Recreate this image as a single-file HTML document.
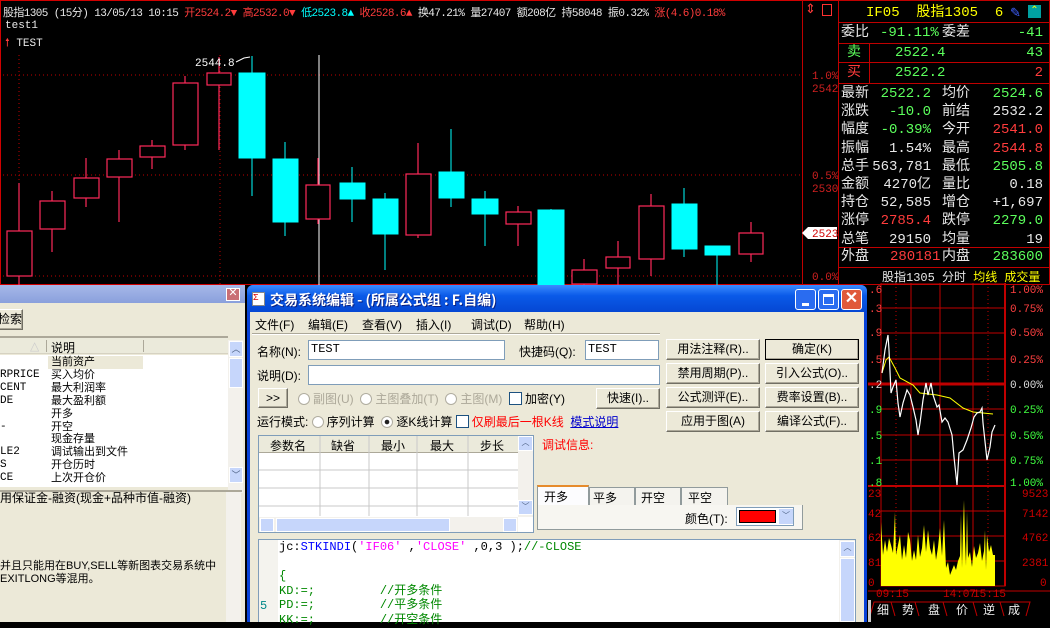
<!DOCTYPE html>
<html><head><meta charset="utf-8">
<style>
*{margin:0;padding:0;box-sizing:border-box}
body{width:1050px;height:622px;overflow:hidden;background:#000;position:relative;font-family:"Liberation Mono","WenQuanYi Zen Hei","Noto Sans CJK SC",monospace;font-size:12px}
.a{position:absolute;white-space:nowrap}
.r{color:#ff3c3c}.g{color:#5cff5c}.w{color:#e8e8e8}.y{color:#ffff00}.c{color:#00ffff}
.qp div.a{font-size:14px;line-height:16px}
.btn{position:absolute;background:#ece9d8;border:1px solid #fff;border-right-color:#716f64;border-bottom-color:#716f64;box-shadow:inset -1px -1px 0 #aca899;font-family:"Liberation Sans","WenQuanYi Zen Hei",sans-serif;font-size:12px;text-align:center;line-height:18px;color:#000}
.inp{position:absolute;background:#fff;border:1px solid #7f9db9;font-size:12px;padding-left:2px;line-height:17px}
.t{position:absolute;white-space:nowrap;font-family:"Liberation Sans","WenQuanYi Zen Hei",sans-serif;font-size:12px;color:#000}
.rad{display:inline-block;width:12px;height:12px;border:1px solid #b0ada0;border-radius:50%;background:#fff;vertical-align:-2px;margin-right:3px}
.chk{display:inline-block;width:13px;height:13px;border:1px solid #1c5180;background:#fff;vertical-align:-2px;margin-right:3px}
</style></head><body>

<!-- main chart -->
<div class="a" style="left:0;top:0;width:838px;height:285px;border:1px solid #d00000;border-right:none"></div>
<div class="a" style="left:802px;top:0;width:1px;height:285px;background:#c00000"></div>
<div class="a" style="left:3px;top:4px;font-size:11px;letter-spacing:-0.6px"><span class="w">股指1305 (15分) 13/05/13 10:15 </span><span class="r">开2524.2▼ 高2532.0▼ </span><span class="c">低2523.8▲ </span><span class="r">收2528.6▲ </span><span class="w">换47.21% 量27407 额208亿 持58048 振0.32% </span><span class="r">涨(4.6)0.18%</span></div>
<div class="a r" style="left:805px;top:2px;font-size:13px">⇕</div>
<div class="a" style="left:822px;top:4px;width:10px;height:12px;border:1px solid #ff3030"></div>
<div class="a w" style="left:5px;top:20px;font-size:11px">test1</div>
<div class="a" style="left:5px;top:34px;font-size:11px"><span class="r">🠕</span><span class="w"> TEST</span></div>

<svg class="a" style="left:0;top:0" width="838" height="285">
<g stroke="#c00000" stroke-dasharray="1,3">
<line x1="3" y1="75" x2="802" y2="75"/><line x1="3" y1="175" x2="802" y2="175"/><line x1="3" y1="276" x2="802" y2="276"/>
<line x1="19" y1="55" x2="19" y2="285"/><line x1="220" y1="55" x2="220" y2="285"/>
</g>
<line x1="319" y1="55" x2="319" y2="285" stroke="#fff"/>
<g stroke="#ff2a5a" stroke-width="1.2" fill="#000">
<line x1="19" y1="183" x2="19" y2="285"/><rect x="7" y="231" width="25" height="45"/>
<line x1="52" y1="191" x2="52" y2="252"/><rect x="40" y="201" width="25" height="28"/>
<line x1="86" y1="158" x2="86" y2="207"/><rect x="74" y="178" width="25" height="20"/>
<line x1="119" y1="150" x2="119" y2="222"/><rect x="107" y="159" width="25" height="18"/>
<line x1="152" y1="140" x2="152" y2="169"/><rect x="140" y="146" width="25" height="11"/>
<line x1="185" y1="76" x2="185" y2="150"/><rect x="173" y="83" width="25" height="62"/>
<line x1="219" y1="57" x2="219" y2="150"/><rect x="207" y="73" width="24" height="12"/>
<line x1="318" y1="158" x2="318" y2="224"/><rect x="306" y="185" width="24" height="34"/>
<line x1="418" y1="143" x2="418" y2="238"/><rect x="406" y="174" width="25" height="61"/>
<line x1="518" y1="206" x2="518" y2="246"/><rect x="506" y="212" width="25" height="12"/>
<line x1="584" y1="259" x2="584" y2="285"/><rect x="572" y="270" width="25" height="14"/>
<line x1="618" y1="241" x2="618" y2="285"/><rect x="606" y="257" width="24" height="11"/>
<line x1="651" y1="194" x2="651" y2="276"/><rect x="639" y="206" width="25" height="53"/>
<line x1="751" y1="222" x2="751" y2="262"/><rect x="739" y="233" width="24" height="21"/>
</g>
<g stroke="#00ffff" fill="#00ffff">
<line x1="252" y1="56" x2="252" y2="196"/><rect x="239" y="73" width="26" height="85"/>
<line x1="285" y1="142" x2="285" y2="236"/><rect x="273" y="159" width="25" height="63"/>
<line x1="352" y1="167" x2="352" y2="222"/><rect x="340" y="183" width="25" height="16"/>
<line x1="385" y1="193" x2="385" y2="270"/><rect x="373" y="199" width="25" height="35"/>
<line x1="451" y1="129" x2="451" y2="207"/><rect x="439" y="172" width="25" height="26"/>
<line x1="485" y1="191" x2="485" y2="246"/><rect x="472" y="199" width="26" height="15"/>
<line x1="551" y1="209" x2="551" y2="285"/><rect x="538" y="210" width="26" height="75"/>
<line x1="684" y1="188" x2="684" y2="257"/><rect x="672" y="204" width="25" height="45"/>
<line x1="717" y1="246" x2="717" y2="285"/><rect x="705" y="246" width="25" height="9"/>
</g>
<polyline points="236,62 244,58 250,57" stroke="#fff" fill="none"/>
<text x="195" y="66" fill="#fff" font-size="11" font-family="Liberation Mono">2544.8</text>
<g fill="#d02020" font-size="11" font-family="Liberation Mono">
<text x="812" y="79">1.0%</text><text x="812" y="92">2542</text>
<text x="812" y="179">0.5%</text><text x="812" y="192">2530</text>
<text x="812" y="280">0.0%</text></g>
<polygon points="802,233 808,227 837,227 837,239 808,239" fill="#fff"/>
<text x="812" y="237" fill="#d00000" font-size="11" font-family="Liberation Mono">2523</text>
</svg>

<!-- right quote panel -->
<div class="qp">
<div class="a" style="left:838px;top:0;width:212px;height:285px;border:1px solid #c00000"></div>
<div class="a y" style="left:866px;top:5px">IF05 &nbsp;股指1305 &nbsp;6</div>
<div class="a" style="left:1010px;top:6px;color:#4060ff;font-size:13px">✎</div>
<div class="a" style="left:1028px;top:5px;width:13px;height:13px;background:#00a0a0;color:#ff0;font-size:10px;line-height:13px;text-align:center">⌃</div>
<div class="a" style="left:838px;top:22px;width:212px;height:1px;background:#c00000"></div>
<div class="a" style="left:838px;top:43px;width:212px;height:1px;background:#c00000"></div>
<div class="a" style="left:838px;top:62px;width:212px;height:1px;background:#c00000"></div>
<div class="a" style="left:838px;top:83px;width:212px;height:1px;background:#c00000"></div>
<div class="a" style="left:869px;top:43px;width:1px;height:40px;background:#c00000"></div>
<div class="a" style="left:838px;top:247px;width:212px;height:1px;background:#c00000"></div>
<div class="a" style="left:838px;top:267px;width:212px;height:1px;background:#c00000"></div>
<div class="a w" style="left:841px;top:25px">委比</div><div class="a g" style="left:880px;top:25px">-91.11%</div><div class="a w" style="left:942px;top:25px">委差</div><div class="a g" style="right:7px;top:25px">-41</div>
<div class="a g" style="left:847px;top:45px">卖</div><div class="a g" style="left:895px;top:45px">2522.4</div><div class="a g" style="right:7px;top:45px">43</div>
<div class="a r" style="left:847px;top:65px">买</div><div class="a g" style="left:895px;top:65px">2522.2</div><div class="a r" style="right:7px;top:65px">2</div>
<div class="a w" style="left:841px;top:85px;line-height:18.2px">最新<br>涨跌<br>幅度<br>振幅<br>总手<br>金额<br>持仓<br>涨停<br>总笔</div>
<div class="a" style="right:119px;top:85px;line-height:18.2px;text-align:right"><span class="g">2522.2</span><br><span class="g">-10.0</span><br><span class="g">-0.39%</span><br><span class="w">1.54%</span><br><span class="w">563,781</span><br><span class="w">4270亿</span><br><span class="w">52,585</span><br><span class="r">2785.4</span><br><span class="w">29150</span></div>
<div class="a w" style="left:942px;top:85px;line-height:18.2px">均价<br>前结<br>今开<br>最高<br>最低<br>量比<br>增仓<br>跌停<br>均量</div>
<div class="a" style="right:7px;top:85px;line-height:18.2px;text-align:right"><span class="g">2524.6</span><br><span class="w">2532.2</span><br><span class="r">2541.0</span><br><span class="r">2544.8</span><br><span class="g">2505.8</span><br><span class="w">0.18</span><br><span class="w">+1,697</span><br><span class="g">2279.0</span><br><span class="w">19</span></div>
<div class="a w" style="left:841px;top:249px">外盘</div><div class="a r" style="left:890px;top:249px">280181</div><div class="a w" style="left:942px;top:249px">内盘</div><div class="a g" style="right:7px;top:249px">283600</div>
</div>
<div class="a" style="left:882px;top:268px;font-size:12px"><span class="w">股指1305 分时 </span><span class="y">均线 成交量</span></div>

<!-- intraday -->
<svg class="a" style="left:860px;top:283px" width="190" height="339">
<g transform="translate(-860,-283)">
<g stroke="#c00000" fill="none">
<line x1="881" y1="308" x2="1005" y2="308"/><line x1="881" y1="333" x2="1005" y2="333"/><line x1="881" y1="359" x2="1005" y2="359"/>
<line x1="881" y1="409" x2="1005" y2="409"/><line x1="881" y1="435" x2="1005" y2="435"/><line x1="881" y1="460" x2="1005" y2="460"/>
<line x1="881" y1="511" x2="1005" y2="511"/><line x1="881" y1="536" x2="1005" y2="536"/><line x1="881" y1="561" x2="1005" y2="561"/>
<line x1="911" y1="283" x2="911" y2="586"/><line x1="940" y1="283" x2="940" y2="586"/><line x1="973" y1="283" x2="973" y2="586"/>
<rect x="881" y="283" width="124" height="303"/>
<line x1="1005" y1="283" x2="1005" y2="586" stroke-width="2"/>
<line x1="868" y1="384" x2="1005" y2="384" stroke-width="3"/>
<line x1="868" y1="486" x2="1005" y2="486" stroke-width="2"/>
<line x1="868" y1="591" x2="1050" y2="591"/>
</g>
<g stroke="#c00000" stroke-dasharray="1,3"><line x1="896" y1="283" x2="896" y2="586"/><line x1="988" y1="283" x2="988" y2="586"/></g>
<polygon fill="#ffff00" points="881,586 881,522 883,555 885,540 887,552 889,538 891,545 893,553 895,512 896,555 898,545 900,535 902,560 904,545 906,558 908,532 910,540 912,561 914,550 916,560 918,535 920,557 922,548 924,525 926,552 928,530 930,548 932,555 934,540 936,560 938,547 940,528 942,556 944,520 946,568 948,562 950,575 952,570 954,565 956,570 958,561 960,556 961,514 962,568 963,528 964,500 965,540 966,566 967,511 968,558 970,552 972,567 974,546 976,558 978,553 980,543 982,561 984,551 985,530 986,570 987,535 989,552 991,545 993,555 995,555 995,586"/>
<polyline fill="none" stroke="#ffff00" points="882,373 886,360 889,357 895,368 900,378 913,385 920,393 937,395 950,398 963,408 973,412 983,413 993,414"/>
<polyline fill="none" stroke="#fff" stroke-width="1.2" points="882,373 885,350 888,335 889,350 891,393 893,387 896,380 898,403 900,417 903,403 907,390 910,395 913,407 916,420 918,435 920,423 923,400 926,383 928,395 931,383 933,395 937,407 939,405 942,422 945,418 948,422 952,435 954,457 957,485 959,453 963,450 967,440 971,428 974,417 977,413 980,412 982,408 983,423 987,460 990,447 992,432 995,425"/>
<g font-size="11" font-family="Liberation Mono">
<text x="1010" y="293" fill="#ff4040">1.00%</text><text x="1010" y="312" fill="#ff4040">0.75%</text><text x="1010" y="336" fill="#ff4040">0.50%</text><text x="1010" y="363" fill="#ff4040">0.25%</text><text x="1010" y="388" fill="#ddd">0.00%</text>
<text x="1010" y="413" fill="#40ff40">0.25%</text><text x="1010" y="439" fill="#40ff40">0.50%</text><text x="1010" y="464" fill="#40ff40">0.75%</text><text x="1010" y="486" fill="#40ff40">1.00%</text>
<text x="1022" y="497" fill="#d00000">9523</text><text x="1022" y="517" fill="#d00000">7142</text><text x="1022" y="541" fill="#d00000">4762</text><text x="1022" y="566" fill="#d00000">2381</text><text x="1040" y="586" fill="#d00000">0</text>
<text x="869" y="293" fill="#ff4040">.6</text><text x="869" y="312" fill="#ff4040">.3</text><text x="869" y="336" fill="#ff4040">.9</text><text x="869" y="363" fill="#ff4040">.5</text><text x="869" y="388" fill="#ddd">.2</text><text x="869" y="413" fill="#40ff40">.9</text><text x="869" y="439" fill="#40ff40">.5</text><text x="869" y="464" fill="#40ff40">.1</text><text x="869" y="486" fill="#40ff40">.8</text>
<text x="868" y="497" fill="#d00000">23</text><text x="868" y="517" fill="#d00000">42</text><text x="868" y="541" fill="#d00000">62</text><text x="868" y="566" fill="#d00000">81</text><text x="868" y="586" fill="#d00000">0</text>
<text x="876" y="597" fill="#d00000">09:15</text><text x="943" y="597" fill="#d00000">14:07</text><text x="973" y="597" fill="#d00000">15:15</text>
</g>
<g stroke="#c00000" fill="none"><polyline points="870,616 874,602 1030,602 1026,616"/>
<line x1="891" y1="602" x2="895" y2="616"/><line x1="915" y1="602" x2="919" y2="616"/><line x1="943" y1="602" x2="947" y2="616"/><line x1="973" y1="602" x2="977" y2="616"/><line x1="1000" y1="602" x2="1004" y2="616"/></g>
<g fill="#eee" font-size="12" font-family="WenQuanYi Zen Hei,Noto Sans CJK SC"><text x="877" y="614">细</text><text x="902" y="614">势</text><text x="928" y="614">盘</text><text x="956" y="614">价</text><text x="983" y="614">逆</text><text x="1008" y="614">成</text></g>
<rect x="868" y="600" width="3" height="22" fill="#ccc"/>
</g></svg>

<!-- left panel -->
<div class="a" style="left:0;top:285px;width:245px;height:337px;background:#ece9d8"></div>
<div class="a" style="left:0;top:285px;width:245px;height:18px;background:linear-gradient(#a6b8e8,#8aa0dc)"></div>
<div class="a" style="left:226px;top:288px;width:14px;height:13px;background:#c96f75;border:1px solid #fff;color:#fff;font-size:11px;line-height:11px;text-align:center">✕</div>
<div class="btn" style="left:-3px;top:309px;width:26px;height:21px">检索</div>
<div class="a" style="left:0;top:336px;width:228px;height:2px;background:#aca899"></div>
<div class="a" style="left:0;top:338px;width:228px;height:16px;background:#ebeadb;border-bottom:1px solid #d6d2c2"></div>
<div class="t" style="left:30px;top:339px;color:#ccc">△</div>
<div class="a" style="left:46px;top:340px;width:1px;height:12px;background:#aca899"></div>
<div class="a" style="left:143px;top:340px;width:1px;height:12px;background:#aca899"></div>
<div class="t" style="left:51px;top:339px">说明</div>
<div class="a" style="left:0;top:355px;width:228px;height:131px;background:#fff"></div>
<div class="a" style="left:48px;top:356px;width:95px;height:13px;background:#ece9d8"></div>
<div class="t" style="left:0;top:356px;line-height:12.9px;font-family:'Liberation Mono','WenQuanYi Zen Hei',monospace;font-size:11px">&nbsp;<br>RPRICE<br>CENT<br>DE<br><br>-<br><br>LE2<br>S<br>CE</div>
<div class="t" style="left:51px;top:356px;line-height:12.9px;font-size:11px">当前资产<br>买入均价<br>最大利润率<br>最大盈利额<br>开多<br>开空<br>现金存量<br>调试输出到文件<br>开仓历时<br>上次开仓价</div>
<div class="a" style="left:0;top:484px;width:228px;height:3px;background:#fff"></div>
<div class="a" style="left:228px;top:340px;width:15px;height:153px;background:#f3f1ec"></div>
<div class="a" style="left:229px;top:341px;width:14px;height:16px;background:#c6d6fb;border:1px solid #fff;color:#4d6185;font-size:9px;text-align:center">︿</div>
<div class="a" style="left:229px;top:358px;width:14px;height:30px;background:#c6d6fb;border:1px solid #fff"></div>
<div class="a" style="left:229px;top:467px;width:14px;height:16px;background:#c6d6fb;border:1px solid #fff;color:#4d6185;font-size:9px;text-align:center">﹀</div>
<div class="a" style="left:0;top:484px;width:242px;height:8px;border-bottom:2px solid #aca899"></div>
<div class="t" style="left:0;top:489px">用保证金-融资(现金+品种市值-融资)</div>
<div class="t" style="left:0;top:560px;line-height:13px;font-size:11px">并且只能用在BUY,SELL等新图表交易系统中<br>EXITLONG等混用。</div>
<div class="a" style="left:226px;top:492px;width:15px;height:130px;background:#f3f1ec"></div>

<!-- dialog -->
<div class="a" style="left:247px;top:285px;width:620px;height:337px;background:#0842d8;border-radius:6px 6px 0 0"></div>
<div class="a" style="left:247px;top:285px;width:620px;height:27px;background:linear-gradient(#3b8cff,#0a5ae8 40%,#0547d3);border-radius:6px 6px 0 0"></div>
<div class="a" style="left:252px;top:292px;width:13px;height:14px;background:#fff;border:1px solid #888;color:#d00;font-size:9px;line-height:11px">Σ</div>
<div class="a" style="left:270px;top:290px;color:#fff;font-weight:bold;font-size:14px;font-family:'WenQuanYi Zen Hei','Noto Sans CJK SC',sans-serif;text-shadow:1px 1px #0a1f7f">交易系统编辑 - (所属公式组 : F.自编)</div>
<div class="a" style="left:795px;top:289px;width:21px;height:21px;background:#2a6cf0;border:1px solid #fff;border-radius:3px"><div class="a" style="left:6px;top:13px;width:7px;height:3px;background:#fff"></div></div>
<div class="a" style="left:818px;top:289px;width:21px;height:21px;background:#2a6cf0;border:1px solid #fff;border-radius:3px"><div class="a" style="left:4px;top:4px;width:11px;height:11px;border:1px solid #fff;border-top-width:3px"></div></div>
<div class="a" style="left:841px;top:289px;width:21px;height:21px;background:#e0593a;border:1px solid #fff;border-radius:3px;color:#fff;font-size:16px;line-height:18px;text-align:center;font-weight:bold">✕</div>
<div class="a" style="left:250px;top:312px;width:614px;height:310px;background:#ece9d8"></div>
<div class="t" style="left:255px;top:316px">文件(F)</div><div class="t" style="left:308px;top:316px">编辑(E)</div><div class="t" style="left:362px;top:316px">查看(V)</div><div class="t" style="left:416px;top:316px">插入(I)</div><div class="t" style="left:471px;top:316px">调试(D)</div><div class="t" style="left:524px;top:316px">帮助(H)</div>
<div class="a" style="left:252px;top:333px;width:408px;height:2px;border-top:1px solid #aca899;border-bottom:1px solid #fff"></div>
<div class="t" style="left:257px;top:343px">名称(N):</div>
<div class="inp" style="left:308px;top:340px;width:197px;height:20px">TEST</div>
<div class="t" style="left:519px;top:343px">快捷码(Q):</div>
<div class="inp" style="left:585px;top:340px;width:74px;height:20px">TEST</div>
<div class="t" style="left:257px;top:367px">说明(D):</div>
<div class="inp" style="left:308px;top:365px;width:352px;height:20px"></div>
<div class="btn" style="left:258px;top:388px;width:30px;height:20px">&gt;&gt;</div>
<div class="t" style="left:298px;top:390px;color:#aca899"><span class="rad"></span>副图(U) &nbsp;<span class="rad"></span>主图叠加(T) &nbsp;<span class="rad"></span>主图(M) &nbsp;<span class="chk"></span><span style="color:#000">加密(Y)</span></div>
<div class="btn" style="left:596px;top:388px;width:64px;height:21px">快速(I)..</div>
<div class="t" style="left:257px;top:413px">运行模式: <span class="rad"></span>序列计算 &nbsp;<span class="rad" style="background:radial-gradient(#222 30%,#fff 35%)"></span>逐K线计算 <span class="chk"></span><span style="color:#f00">仅刷最后一根K线</span> &nbsp;<span style="color:#00c;text-decoration:underline">模式说明</span></div>
<div class="btn" style="left:666px;top:339px;width:94px;height:21px">用法注释(R)..</div>
<div class="btn" style="left:765px;top:339px;width:94px;height:21px;border:1px solid #000">确定(K)</div>
<div class="btn" style="left:666px;top:363px;width:94px;height:21px">禁用周期(P)..</div>
<div class="btn" style="left:765px;top:363px;width:94px;height:21px">引入公式(O)..</div>
<div class="btn" style="left:666px;top:387px;width:94px;height:21px">公式测评(E)..</div>
<div class="btn" style="left:765px;top:387px;width:94px;height:21px">费率设置(B)..</div>
<div class="btn" style="left:666px;top:411px;width:94px;height:21px">应用于图(A)</div>
<div class="btn" style="left:765px;top:411px;width:94px;height:21px">编译公式(F)..</div>
<!-- table -->
<div class="a" style="left:258px;top:435px;width:276px;height:98px;background:#fff;border:1px solid #7f9db9"></div>
<div class="a" style="left:259px;top:436px;width:259px;height:17px;background:#ebeadb;border-bottom:1px solid #aca899"></div>
<div class="t" style="left:270px;top:437px">参数名</div><div class="t" style="left:331px;top:437px">缺省</div><div class="t" style="left:381px;top:437px">最小</div><div class="t" style="left:430px;top:437px">最大</div><div class="t" style="left:480px;top:437px">步长</div>
<svg class="a" style="left:259px;top:436px" width="259" height="80"><g stroke="#c8c8c8"><line x1="61" y1="0" x2="61" y2="80"/><line x1="110" y1="0" x2="110" y2="80"/><line x1="158" y1="0" x2="158" y2="80"/><line x1="209" y1="0" x2="209" y2="80"/><line x1="0" y1="34" x2="259" y2="34"/><line x1="0" y1="52" x2="259" y2="52"/><line x1="0" y1="70" x2="259" y2="70"/></g></svg>
<div class="a" style="left:518px;top:436px;width:15px;height:81px;background:#f3f1ec"></div>
<div class="a" style="left:518px;top:436px;width:15px;height:15px;background:#c6d6fb;border:1px solid #fff;font-size:8px;color:#4d6185;text-align:center">︿</div>
<div class="a" style="left:518px;top:500px;width:15px;height:15px;background:#c6d6fb;border:1px solid #fff;font-size:8px;color:#4d6185;text-align:center">﹀</div>
<div class="a" style="left:259px;top:517px;width:259px;height:15px;background:#f3f1ec"></div>
<div class="a" style="left:260px;top:518px;width:14px;height:14px;background:#c6d6fb;border:1px solid #fff"></div>
<div class="a" style="left:276px;top:518px;width:174px;height:14px;background:#c6d6fb;border:1px solid #fff"></div>
<div class="a" style="left:503px;top:518px;width:14px;height:14px;background:#c6d6fb;border:1px solid #fff"></div>
<div class="t" style="left:542px;top:436px;color:#f00">调试信息:</div>
<!-- tabs -->
<div class="a" style="left:537px;top:485px;width:52px;height:21px;background:#fcfcfe;border:1px solid #919b9c;border-bottom:none;border-top:2px solid #e68b2c"></div>
<div class="t" style="left:544px;top:488px">开多</div>
<div class="a" style="left:589px;top:487px;width:46px;height:19px;background:#f4f3ee;border:1px solid #919b9c"></div><div class="t" style="left:593px;top:489px">平多</div>
<div class="a" style="left:635px;top:487px;width:46px;height:19px;background:#f4f3ee;border:1px solid #919b9c"></div><div class="t" style="left:641px;top:489px">开空</div>
<div class="a" style="left:681px;top:487px;width:47px;height:19px;background:#f4f3ee;border:1px solid #919b9c"></div><div class="t" style="left:688px;top:489px">平空</div>
<div class="a" style="left:537px;top:505px;width:266px;height:25px;background:#f7f6f1;border:1px solid #919b9c;border-top:none"></div>
<div class="t" style="left:685px;top:510px">颜色(T):</div>
<div class="a" style="left:736px;top:507px;width:58px;height:19px;border:1px solid #7f9db9;background:#fff"><div class="a" style="left:2px;top:2px;width:37px;height:13px;background:#f00;border:1px solid #000"></div><div class="a" style="left:42px;top:1px;width:14px;height:15px;background:#c6d6fb;font-size:8px;color:#4d6185;text-align:center;line-height:15px">﹀</div></div>
<!-- editor -->
<div class="a" style="left:258px;top:539px;width:598px;height:83px;background:#fff;border:1px solid #7f9db9;border-bottom:none"></div>
<div class="a" style="left:259px;top:540px;width:19px;height:82px;background:#f4f3ee"></div>
<div class="a" style="left:839px;top:540px;width:16px;height:82px;background:#f3f1ec"></div>
<div class="a" style="left:840px;top:541px;width:15px;height:16px;background:#c6d6fb;border:1px solid #fff;font-size:8px;color:#4d6185;text-align:center">︿</div>
<div class="a" style="left:840px;top:558px;width:15px;height:64px;background:#c6d6fb;border:1px solid #fff"></div>
<div class="a" style="left:279px;top:540px;font-size:12px;line-height:14.6px;font-family:'Liberation Mono','WenQuanYi Zen Hei',monospace"><span style="color:#000">jc:</span><span style="color:#00f">STKINDI</span>(<span style="color:#f0f">'IF06'</span> ,<span style="color:#f0f">'CLOSE'</span> ,0,3 );<span style="color:#080">//-CLOSE</span><br><br><span style="color:#080">{<br>KD:=; &nbsp; &nbsp; &nbsp; &nbsp; //开多条件<br>PD:=; &nbsp; &nbsp; &nbsp; &nbsp; //平多条件<br>KK:=; &nbsp; &nbsp; &nbsp; &nbsp; //开空条件</span></div>
<div class="a" style="left:260px;top:599px;color:#088;font-size:12px">5</div>
<div class="a" style="left:864px;top:312px;width:3px;height:310px;background:#0842d8"></div>
</body></html>
